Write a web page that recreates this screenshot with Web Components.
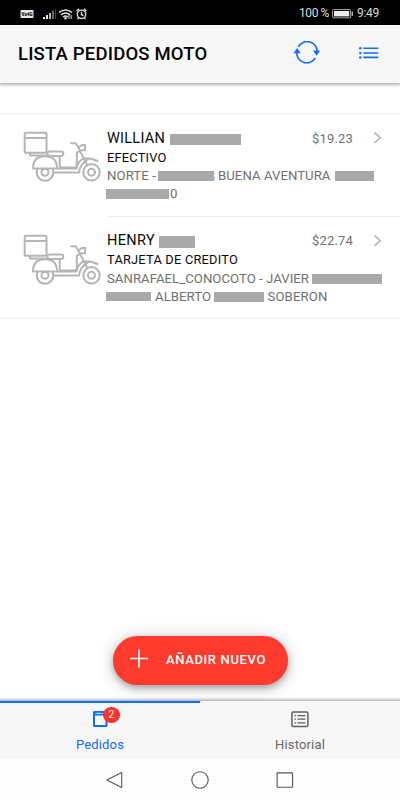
<!DOCTYPE html>
<html lang="es">
<head>
<meta charset="utf-8">
<title>Lista pedidos moto</title>
<style>
html,body{margin:0;height:100%}
body{font-family:Roboto,"Liberation Sans",sans-serif;background:#fff;color:#0a0a0a;overflow:hidden}
</style>
</head>
<body>
<moto-app></moto-app>
<script>
const define=(name,html,ready)=>customElements.define(name,class extends HTMLElement{
  constructor(){super();const t=document.createElement('template');t.innerHTML=html;this.attachShadow({mode:'open'}).append(t.content.cloneNode(true));}
  connectedCallback(){if(ready)ready.call(this,this.shadowRoot);}
});

/* A run of text whose tracking is adjusted to fill the width in "w". */
define('text-run',`<style>:host{display:block;flex:none;white-space:pre;line-height:1.3}span{display:inline-block}</style><span><slot></slot></span>`,function(root){
  const s=root.querySelector('span'),w=+this.getAttribute('w');
  const natural=s.getBoundingClientRect().width,n=this.textContent.length;
  this.style.letterSpacing=((w-natural)/n)+'px';
  this.style.width=w+'px';
});

define('hidden-bar',`<style>:host{display:block;flex:none;background:#a9a9a9;width:var(--w);height:var(--h,10px);z-index:1}</style>`,function(){
  this.style.setProperty('--w',this.getAttribute('w')+'px');
  if(this.hasAttribute('h'))this.style.setProperty('--h',this.getAttribute('h')+'px');
});

define('status-bar',`<style>
:host{display:flex;align-items:center;justify-content:space-between;height:25px;box-sizing:border-box;background:#000;padding:2px 21px 0 20px;color:#ddd;font-size:12px}
div{display:flex;align-items:center}svg{display:block}
</style>
<div>
<svg width="70" height="16" viewBox="0 0 70 16">
<rect x="0.5" y="4" width="13" height="8" rx="1" fill="#e8e8e8"/><text x="1.6" y="10.2" font-size="5.6" font-weight="900" textLength="11" lengthAdjust="spacingAndGlyphs" fill="#000">Vo4G</text>
<path d="M24 13v-2M27 13v-4" stroke="#e8e8e8" stroke-width="2"/><path d="M30 13V7" stroke="#bbb" stroke-width="2"/><path d="M33 13V4.5" stroke="#777" stroke-width="1.7"/><path d="M35.5 13V3" stroke="#444"/>
<g fill="none" stroke="#ddd" stroke-width="1.5"><path d="M39 6.4q6.5-5 13 0M41 8.8q4.5-3.5 9 0M43 11q2.5-2 5 0"/></g><circle cx="45.5" cy="12.3" r="1.2" fill="#eee"/><path d="M49 9v4M51.2 13V9" stroke="#ddd"/>
<g fill="none" stroke="#ddd" stroke-width="1.4"><circle cx="61.5" cy="8.3" r="4.2"/><path d="M61.5 5.7v3l2 1M56.600 5l2.500-2.200M66.400 5l-2.500-2.200M58.800 11.500l-1.200 1.700M64.200 11.500l1.200 1.700"/></g>
</svg></div>
<div><text-run w="30">100 %</text-run>
<svg width="28" height="16" viewBox="0 0 28 16"><rect x="3.600" y="3.600" width="18" height="8.200" rx=".8" fill="none" stroke="#aaa"/><rect x="5" y="5" width="15.200" height="5.400" fill="#eee"/><path d="M23.300 5.500v4.500" stroke="#bbb" stroke-width="1.300"/></svg>
<text-run w="22">9:49</text-run></div>`);

define('app-header',`<style>
:host{display:flex;align-items:center;height:58px;box-sizing:border-box;background:#f7f7f7;padding:0 21px 0 18px;box-shadow:0 1px 3px 1px rgba(0,0,0,.3);position:relative;color:#050505}
text-run{font-size:18.500px;font-weight:500;margin-right:auto}
svg{display:block;margin-bottom:2px}.refresh{margin-right:38px}
</style>
<text-run w="189.500">LISTA PEDIDOS MOTO</text-run>
<svg class="refresh" width="28" height="24" viewBox="0 0 28 24"><g fill="none" stroke="#116cff" stroke-width="1.600"><path d="M5.300 5.900A9.800 9.200 0 0 1 23.900 11M22.300 17A9.800 9.200 0 0 1 4.100 10.800"/></g><path d="M20 9.500h7.200l-3.600 5.200zM.500 12.200h7.200L4.100 7z" fill="#116cff"/></svg>
<svg width="20" height="14" viewBox="0 0 20 14"><path d="M4.300 2.300H19.300M4.300 7H19.300M4.300 11.400H19.300" stroke="#116cff" stroke-width="1.600"/><g fill="#116cff"><circle cx="1.300" cy="2.300" r="1.250"/><circle cx="1.300" cy="7" r="1.250"/><circle cx="1.300" cy="11.400" r="1.250"/></g></svg>`);

define('delivery-scooter',`<style>:host{display:block;width:80px;height:52px}svg{display:block}</style>
<svg width="80" height="52" viewBox="22 130 80 52" fill="none" stroke="#b5b5b5" stroke-width="2" stroke-linejoin="round" stroke-linecap="round">
<rect x="24.700" y="132.700" width="21.800" height="20" rx="1"/><path d="M25 138h21.300M30 153v2.400h17M49 151.500h12.300a2 2 0 0 1 2 2q0 2.400-2.300 2.400H49.500q-2 0-2-2.200 0-2.200 1.500-2.200z"/>
<path d="M33 168.600q0-12.300 12.200-12.300Q57 156.300 57 168.600z"/>
<path d="M37.200 169.500a8.300 8.300 0 1 0 15.600 0"/><circle cx="45" cy="172.300" r="3.500"/>
<path d="M53.500 172.600H79q1.200-9.200 9-13.200M57 168.600H76.500Q77 162.500 83 158.500"/>
<path d="M59.700 156.500v9q0 1.900 2 1.900h12.800q2.300 0 2.300-2.300V153q0-.8 1.800-1.200M71.300 143.200h3.400q1.400 0 2 1.400l10.200 19.500"/>
<path d="M78.800 147.200l3-2.100h3.300v5.200h-4.500M83 158.700q7-1.500 14.500 2.300"/>
<circle cx="91.500" cy="172.300" r="8.200"/><circle cx="91.500" cy="172.300" r="3.500"/>
</svg>`);

define('order-line',`<style>
:host{display:flex;align-items:center;height:18px;font-size:13.200px;color:#707070}
:host([kind=name]){font-size:14.500px;height:20px;color:#080808;margin-right:auto}
:host([kind=pay]){font-size:12.800px;color:#080808;height:18px}
</style><slot></slot>`);

define('order-list',`<style>
:host{display:block;margin-top:30px;border-top:1px solid #eee}
</style>
<order-row>
<order-line slot="name" kind="name"><text-run w="58">WILLIAN</text-run><hidden-bar w="71" h="11" style="margin-left:4.500px"></hidden-bar></order-line>
<text-run slot="price" w="41">$19.23</text-run>
<order-line kind="pay"><text-run w="59.500">EFECTIVO</text-run></order-line>
<order-line><text-run w="49">NORTE -</text-run><hidden-bar w="56" style="margin-left:2px"></hidden-bar><text-run w="8" style="margin-left:-7px">S</text-run><text-run w="112.500" style="margin-left:3px">BUENA AVENTURA</text-run><hidden-bar w="39" style="margin-left:4px"></hidden-bar></order-line>
<order-line><hidden-bar w="62.500" style="margin-left:-1px"></hidden-bar><text-run w="8" style="margin-left:-6.500px">6</text-run><text-run w="8">0</text-run></order-line>
</order-row>
<order-row last>
<order-line slot="name" kind="name"><text-run w="48">HENRY</text-run><hidden-bar w="36" h="12" style="margin-left:3.500px"></hidden-bar></order-line>
<text-run slot="price" w="41">$22.74</text-run>
<order-line kind="pay"><text-run w="131">TARJETA DE CREDITO</text-run></order-line>
<order-line><text-run w="202">SANRAFAEL_CONOCOTO - JAVIER</text-run><hidden-bar w="70" style="margin-left:3px"></hidden-bar></order-line>
<order-line><hidden-bar w="45" h="9" style="margin-left:-1px"></hidden-bar><text-run w="56" style="margin-left:4px">ALBERTO</text-run><hidden-bar w="50" h="10" style="margin-left:3px"></hidden-bar><text-run w="60" style="margin-left:3.500px">SOBERON</text-run></order-line>
</order-row>`);

define('order-row',`<style>
:host{display:grid;grid-template-columns:107px 1fr;height:102.500px;box-sizing:border-box}
.pic{padding:16px 0 0 22px}
.body{border-bottom:1px solid #eee;padding-top:15px}
:host([last]) .pic{border-bottom:1px solid #eee}
.top{display:flex;align-items:center;height:20px}
.price{color:#707070;font-size:13px;margin-right:20px}
svg{display:block;margin-right:18px;margin-bottom:2px}
</style>
<div class="pic"><delivery-scooter></delivery-scooter></div>
<div class="body"><div class="top"><slot name="name"></slot><div class="price"><slot name="price"></slot></div>
<svg width="9" height="14" viewBox="0 0 9 14"><path d="M1.500 1.500l5.700 5.200-5.700 5.200" fill="none" stroke="#b9b9b9" stroke-width="1.700"/></svg></div>
<slot></slot></div>`);

define('add-button',`<style>
:host{display:flex;align-items:center;width:175px;height:49px;box-sizing:border-box;padding-left:17.500px;border-radius:25px;background:#ff3b30;color:#fff;box-shadow:0 3px 6px rgba(0,0,0,.27),0 2px 18px rgba(0,0,0,.2);margin:auto 0 16px 112.500px}
svg{display:block;margin-right:17px;margin-top:-4px}text-run{font-size:13px;font-weight:500}
</style><svg width="19" height="19" viewBox="0 0 19 19"><path d="M9 .5v18M0 9.500h18" stroke="#fff" stroke-width="1.700"/></svg><text-run w="100">AÑADIR NUEVO</text-run>`);

define('tab-item',`<style>
:host{display:flex;flex-direction:column;align-items:center;flex:1;box-sizing:border-box;border-top:2px solid transparent;padding-top:7px;color:#686868;font-size:13px;gap:7px}
:host([active]){color:#116cff;border-color:#116cff}
</style><slot name="icon"></slot><slot></slot>`);

define('tab-bar',`<style>
:host{display:flex;height:58px;background:#f7f7f7;box-shadow:0 -1px 2px 1px rgba(0,0,0,.25);position:relative}
.icon{position:relative;display:block;height:20px}svg{display:block}
.badge{position:absolute;left:10.500px;top:-3px;width:17.500px;height:16px;border-radius:50%;background:#ff3129;color:#fff;font-size:10px;line-height:16px;text-align:center}
</style>
<tab-item active><div class="icon" slot="icon"><svg width="16" height="20" viewBox="0 0 16 20" fill="none" stroke="#116cff" stroke-width="2"><rect x="2" y="2" width="12.500" height="14" rx=".5"/><path d="M2 4.500h12"/><path d="M4.700 3.300h4.500" stroke="#cfe0ff" stroke-width="1"/></svg><span class="badge">2</span></div><text-run w="48">Pedidos</text-run></tab-item>
<tab-item><div class="icon" slot="icon"><svg width="20" height="20" viewBox="0 0 20 20" fill="none" stroke="#606060"><rect x="1.900" y="1.900" width="16" height="14.500" rx="1.500" stroke-width="1.500"/><path d="M7.500 5.600H15.500M7.500 9.200H15.500M7.500 12.800H15.500M4.500 5.600h1.500M4.500 9.200h1.500M4.500 12.800h1.500" stroke-width="1.200"/></svg></div><text-run w="50">Historial</text-run></tab-item>`);

define('system-nav',`<style>:host{display:flex;align-items:center;justify-content:center;gap:67px;height:41px;background:#fdfdfd;position:relative}svg{display:block}</style>
<svg width="18" height="18" viewBox="0 0 18 18"><path d="M15.700 1.500v15L.9 9z" fill="none" stroke="#555" stroke-width="1.100" stroke-linejoin="round"/></svg>
<svg width="18" height="18" viewBox="0 0 18 18"><circle cx="9" cy="9" r="8.200" fill="none" stroke="#555" stroke-width="1.100"/></svg>
<svg width="18" height="18" viewBox="0 0 18 18"><rect x="1.100" y="1.900" width="15.500" height="14.300" rx=".5" fill="none" stroke="#555" stroke-width="1.100"/></svg>`);

define('moto-app',`<style>:host{display:flex;flex-direction:column;width:400px;height:800px;background:#fff}</style>
<status-bar></status-bar><app-header></app-header><order-list></order-list><add-button></add-button><tab-bar></tab-bar><system-nav></system-nav>`);
</script>
</body>
</html>
